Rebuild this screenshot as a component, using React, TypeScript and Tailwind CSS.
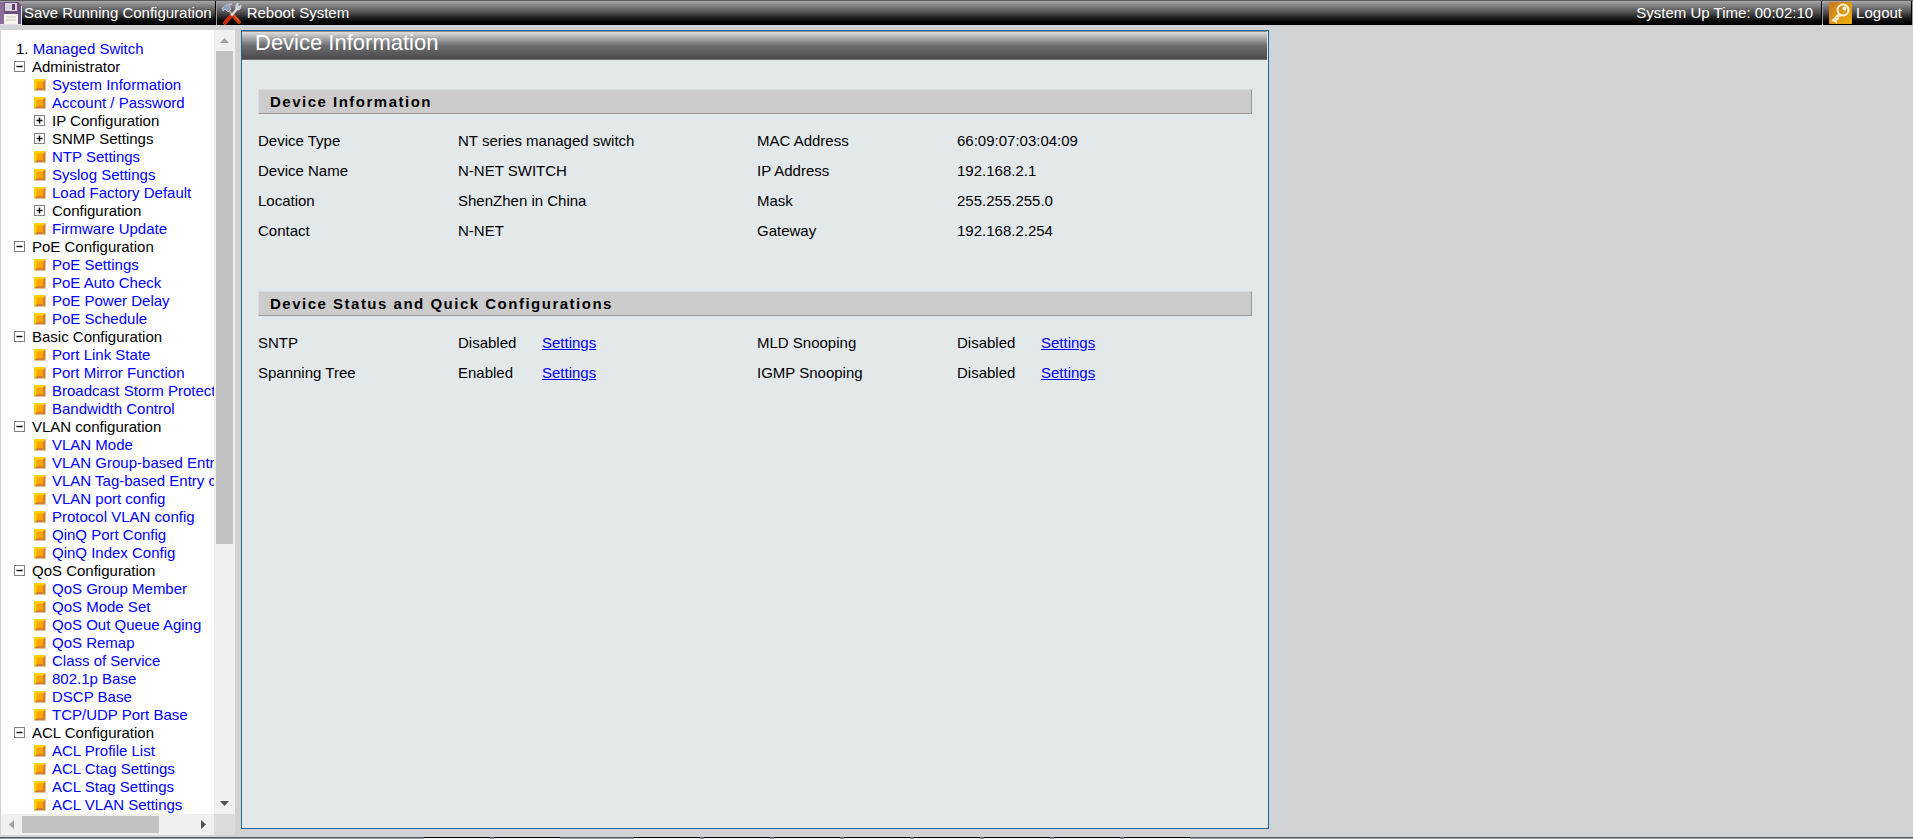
import React from 'react';

type TreeItem = { label: string; folder?: boolean };
type TreeGroup = { label: string; items: TreeItem[] };

const TREE: TreeGroup[] = [
  {
    label: 'Administrator',
    items: [
      { label: 'System Information' },
      { label: 'Account / Password' },
      { label: 'IP Configuration', folder: true },
      { label: 'SNMP Settings', folder: true },
      { label: 'NTP Settings' },
      { label: 'Syslog Settings' },
      { label: 'Load Factory Default' },
      { label: 'Configuration', folder: true },
      { label: 'Firmware Update' },
    ],
  },
  {
    label: 'PoE Configuration',
    items: [
      { label: 'PoE Settings' },
      { label: 'PoE Auto Check' },
      { label: 'PoE Power Delay' },
      { label: 'PoE Schedule' },
    ],
  },
  {
    label: 'Basic Configuration',
    items: [
      { label: 'Port Link State' },
      { label: 'Port Mirror Function' },
      { label: 'Broadcast Storm Protect' },
      { label: 'Bandwidth Control' },
    ],
  },
  {
    label: 'VLAN configuration',
    items: [
      { label: 'VLAN Mode' },
      { label: 'VLAN Group-based Entry' },
      { label: 'VLAN Tag-based Entry config' },
      { label: 'VLAN port config' },
      { label: 'Protocol VLAN config' },
      { label: 'QinQ Port Config' },
      { label: 'QinQ Index Config' },
    ],
  },
  {
    label: 'QoS Configuration',
    items: [
      { label: 'QoS Group Member' },
      { label: 'QoS Mode Set' },
      { label: 'QoS Out Queue Aging' },
      { label: 'QoS Remap' },
      { label: 'Class of Service' },
      { label: '802.1p Base' },
      { label: 'DSCP Base' },
      { label: 'TCP/UDP Port Base' },
    ],
  },
  {
    label: 'ACL Configuration',
    items: [
      { label: 'ACL Profile List' },
      { label: 'ACL Ctag Settings' },
      { label: 'ACL Stag Settings' },
      { label: 'ACL VLAN Settings' },
    ],
  },
];

const INFO = [
  ['Device Type', 'NT series managed switch', 'MAC Address', '66:09:07:03:04:09'],
  ['Device Name', 'N-NET SWITCH', 'IP Address', '192.168.2.1'],
  ['Location', 'ShenZhen in China', 'Mask', '255.255.255.0'],
  ['Contact', 'N-NET', 'Gateway', '192.168.2.254'],
];

const STATUS = [
  ['SNTP', 'Disabled', 'MLD Snooping', 'Disabled'],
  ['Spanning Tree', 'Enabled', 'IGMP Snooping', 'Disabled'],
];

function SaveIcon() {
  return (
    <svg width="22" height="23" viewBox="0 0 22 23" className="shrink-0">
      <path d="M0 0h18l3 3v19H0z" fill="#6f5180" />
      <path d="M0 0h4v22H0z" fill="#8a6d9a" />
      <path d="M5 1h12v8H5z" fill="#d9d3de" />
      <path d="M12 2h3v6h-3z" fill="#5b3f6d" />
      <path d="M4 12h14v10H4z" fill="#f4f4ee" />
      <path d="M6 15h10M6 18h10" stroke="#c9c9c0" />
      <path d="M0 22.500h22M21.500 4v19" stroke="#e4dfe8" />
    </svg>
  );
}

function ToolsIcon() {
  return (
    <svg width="22" height="23" viewBox="0 0 22 23" className="shrink-0">
      <path d="m10 11 8 9" stroke="#c23c10" strokeWidth="4" strokeLinecap="round" />
      <path d="m10 10 8 9" stroke="#f0763c" strokeWidth="1" />
      <path d="m7 7 4 5" stroke="#9aa6b8" strokeWidth="2" />
      <path d="M1 7c1-3 5-5 10-5L8 4l2 3-3 3-3-3-2 2z" fill="#8fa0bb" stroke="#dfe7f2" strokeWidth=".6" />
      <path d="M16 7 9 15" stroke="#d5dbe4" strokeWidth="2.400" />
      <path d="M17 1c-2 1-3 4-2 6l2 1c2 0 3-2 3-5l-2 2-1-1z" fill="#c3cddb" stroke="#eef3f9" strokeWidth=".6" />
      <path d="m9 15-5 6" stroke="#d32613" strokeWidth="4" strokeLinecap="round" />
    </svg>
  );
}

function KeyIcon() {
  return (
    <svg width="23" height="22" viewBox="0 0 23 22" className="shrink-0">
      <defs>
        <linearGradient id="key" x1="0" y1="0" x2="1" y2="1">
          <stop offset="0" stopColor="#c87a1c" />
          <stop offset="1" stopColor="#eeb010" />
        </linearGradient>
      </defs>
      <rect width="23" height="22" rx="1" fill="url(#key)" />
      <circle cx="14" cy="8" r="5.500" fill="none" stroke="#fdf2dc" strokeWidth="2" />
      <path d="M10 12 3 19M4 18l3 2v-3h2v-3h3" stroke="#fdf2dc" strokeWidth="1.600" fill="none" />
      <circle cx="15.500" cy="6.500" r="2" fill="#fdf2dc" />
    </svg>
  );
}

function FolderBox({ open }: { open?: boolean }) {
  return (
    <svg width="12" height="12" viewBox="0 0 12 12" className="shrink-0">
      <rect x=".5" y=".5" width="10" height="10" fill="#fff" stroke="#808080" />
      <path d={open ? 'M2.500 5.500h6' : 'M2.500 5.500h6M5.500 2.500v6'} stroke="#000" strokeWidth="1.400" />
    </svg>
  );
}

function LeafBox() {
  return (
    <svg width="12" height="12" viewBox="0 0 12 12" className="shrink-0">
      <path d="M0 0h11.500L0 11.500z" fill="#ffd000" />
      <path d="M11.500 0v11.500H0z" fill="#d08030" />
      <rect x="2.500" y="2.500" width="6.500" height="6.500" fill="#ffa500" />
    </svg>
  );
}

function Divider() {
  return <span className="h-full w-[2px] shrink-0 border-l border-black bg-[#9a9a9a]" />;
}

function Sidebar() {
  return (
    <aside className="ml-px grid w-[234px] shrink-0 grid-cols-[minmax(0,1fr)_21px] grid-rows-[minmax(0,1fr)_21px] bg-[#f0f0f0]">
      <nav className="overflow-hidden bg-white pt-[10px] whitespace-nowrap leading-[18px]">
        <div className="pl-[15px]">
          1. <a href="#" className="text-[#0000ff]">Managed Switch</a>
        </div>
        {TREE.map((group) => (
          <div key={group.label}>
            <div className="flex items-center gap-[6px] pl-[13px]">
              <FolderBox open />
              <span>{group.label}</span>
            </div>
            <ul>
              {group.items.map((item) => (
                <li key={item.label} className="flex items-center gap-[6px] pl-[33px]">
                  {item.folder ? <FolderBox /> : <LeafBox />}
                  {item.folder ? (
                    <span>{item.label}</span>
                  ) : (
                    <a href="#" className="text-[#0000ff]">{item.label}</a>
                  )}
                </li>
              ))}
            </ul>
          </div>
        ))}
      </nav>

      {/* Vertical scrollbar */}
      <div className="flex flex-col items-center">
        <span className="flex h-[21px] items-center">
          <svg width="9" height="5" viewBox="0 0 9 5"><path d="M0 5 4.500 0 9 5z" fill="#a3a3a3" /></svg>
        </span>
        <span className="w-[17px] grow-[493] bg-[#c1c1c1]" />
        <span className="grow-[249]" />
        <span className="flex h-[21px] items-center">
          <svg width="9" height="5" viewBox="0 0 9 5"><path d="M0 0h9L4.500 5z" fill="#505050" /></svg>
        </span>
      </div>

      {/* Horizontal scrollbar */}
      <div className="flex items-center">
        <span className="flex w-[21px] justify-center">
          <svg width="5" height="9" viewBox="0 0 5 9"><path d="M5 0v9L0 4.500z" fill="#a3a3a3" /></svg>
        </span>
        <span className="h-[17px] grow-[137] bg-[#c1c1c1]" />
        <span className="grow-[34]" />
        <span className="flex w-[21px] justify-center">
          <svg width="5" height="9" viewBox="0 0 5 9"><path d="M0 0v9l5-4.500z" fill="#505050" /></svg>
        </span>
      </div>
      <div className="bg-[#dcdcdc]" />
    </aside>
  );
}

function SectionTitle({ children }: { children: React.ReactNode }) {
  return (
    <h2 className="h-[25px] border border-t-[#dcdcdc] border-r-[#999] border-b-[#999] border-l-[#dcdcdc] bg-[#ccc] pl-[11px] leading-[24px] font-bold tracking-widest">
      {children}
    </h2>
  );
}

function Cols() {
  return (
    <colgroup>
      <col className="w-[200px]" />
      <col className="w-[299px]" />
      <col className="w-[200px]" />
      <col />
    </colgroup>
  );
}

function Tab() {
  return <span className="h-[2px] w-[66px] border-t border-black bg-[#eef1f5]" />;
}

export default function App() {
  return (
    <div className="flex h-screen flex-col overflow-hidden bg-[#d1d2d4] font-['Liberation_Sans',Arial,sans-serif] text-[15px] text-black">
      <header className="flex h-[25px] shrink-0 items-center border-t border-[#5c5a5e] bg-linear-to-b from-[#a8a7aa] via-[#4a4a4b] to-black text-white">
        <button className="flex items-center gap-[2px]">
          <SaveIcon />
          Save Running Configuration
        </button>
        <span className="ml-[3px] flex h-full"><Divider /></span>
        <button className="ml-1 flex items-center gap-1">
          <ToolsIcon />
          Reboot System
        </button>
        <span className="mr-2 ml-auto">System Up Time: 00:02:10</span>
        <Divider />
        <button className="mr-[9px] ml-[6px] flex items-center gap-1">
          <KeyIcon />
          Logout
        </button>
        <Divider />
      </header>

      <div className="flex min-h-0 flex-1 pt-[5px]">
        <div className="flex pb-[2px]"><Sidebar /></div>
        <main className="mb-2 ml-[6px] w-[1028px] border border-[#1b6595] bg-[#e3e8eb]">
          <h1 className="mr-px h-[29px] border-t border-b border-t-[#8f9193] border-b-[#6d6d70] bg-linear-to-b from-[#dedfe1] via-[#6d6e70] to-[#4b4b4d] pl-[13px] text-[22px] leading-[21px] text-white">
            Device Information
          </h1>
          <div className="px-4 pt-[29px]">
            <SectionTitle>Device Information</SectionTitle>
            <table className="mt-3 w-full table-fixed">
              <Cols />
              <tbody>
                {INFO.map((row) => (
                  <tr key={row[0]} className="h-[30px]">
                    {row.map((cell) => <td key={cell}>{cell}</td>)}
                  </tr>
                ))}
              </tbody>
            </table>
            <div className="mt-[45px]">
              <SectionTitle>Device Status and Quick Configurations</SectionTitle>
            </div>
            <table className="mt-3 w-full table-fixed">
              <Cols />
              <tbody>
                {STATUS.map(([a, av, b, bv]) => (
                  <tr key={a} className="h-[30px]">
                    <td>{a}</td>
                    <td>
                      <span className="inline-block w-[84px]">{av}</span>
                      <a href="#" className="text-[#0000ee] underline">Settings</a>
                    </td>
                    <td>{b}</td>
                    <td>
                      <span className="inline-block w-[84px]">{bv}</span>
                      <a href="#" className="text-[#0000ee] underline">Settings</a>
                    </td>
                  </tr>
                ))}
              </tbody>
            </table>
          </div>
        </main>
      </div>

      {/* Top edge of the bottom tab strip */}
      <footer className="flex h-[2px] shrink-0 gap-1 bg-linear-to-b from-[#3c4450] to-[#a9b5c3] pl-[424px]">
        <Tab />
        <Tab />
        <span className="w-[66px]" />
        <Tab />
        <Tab />
        <Tab />
        <Tab />
        <Tab />
        <Tab />
        <Tab />
        <Tab />
      </footer>
    </div>
  );
}
